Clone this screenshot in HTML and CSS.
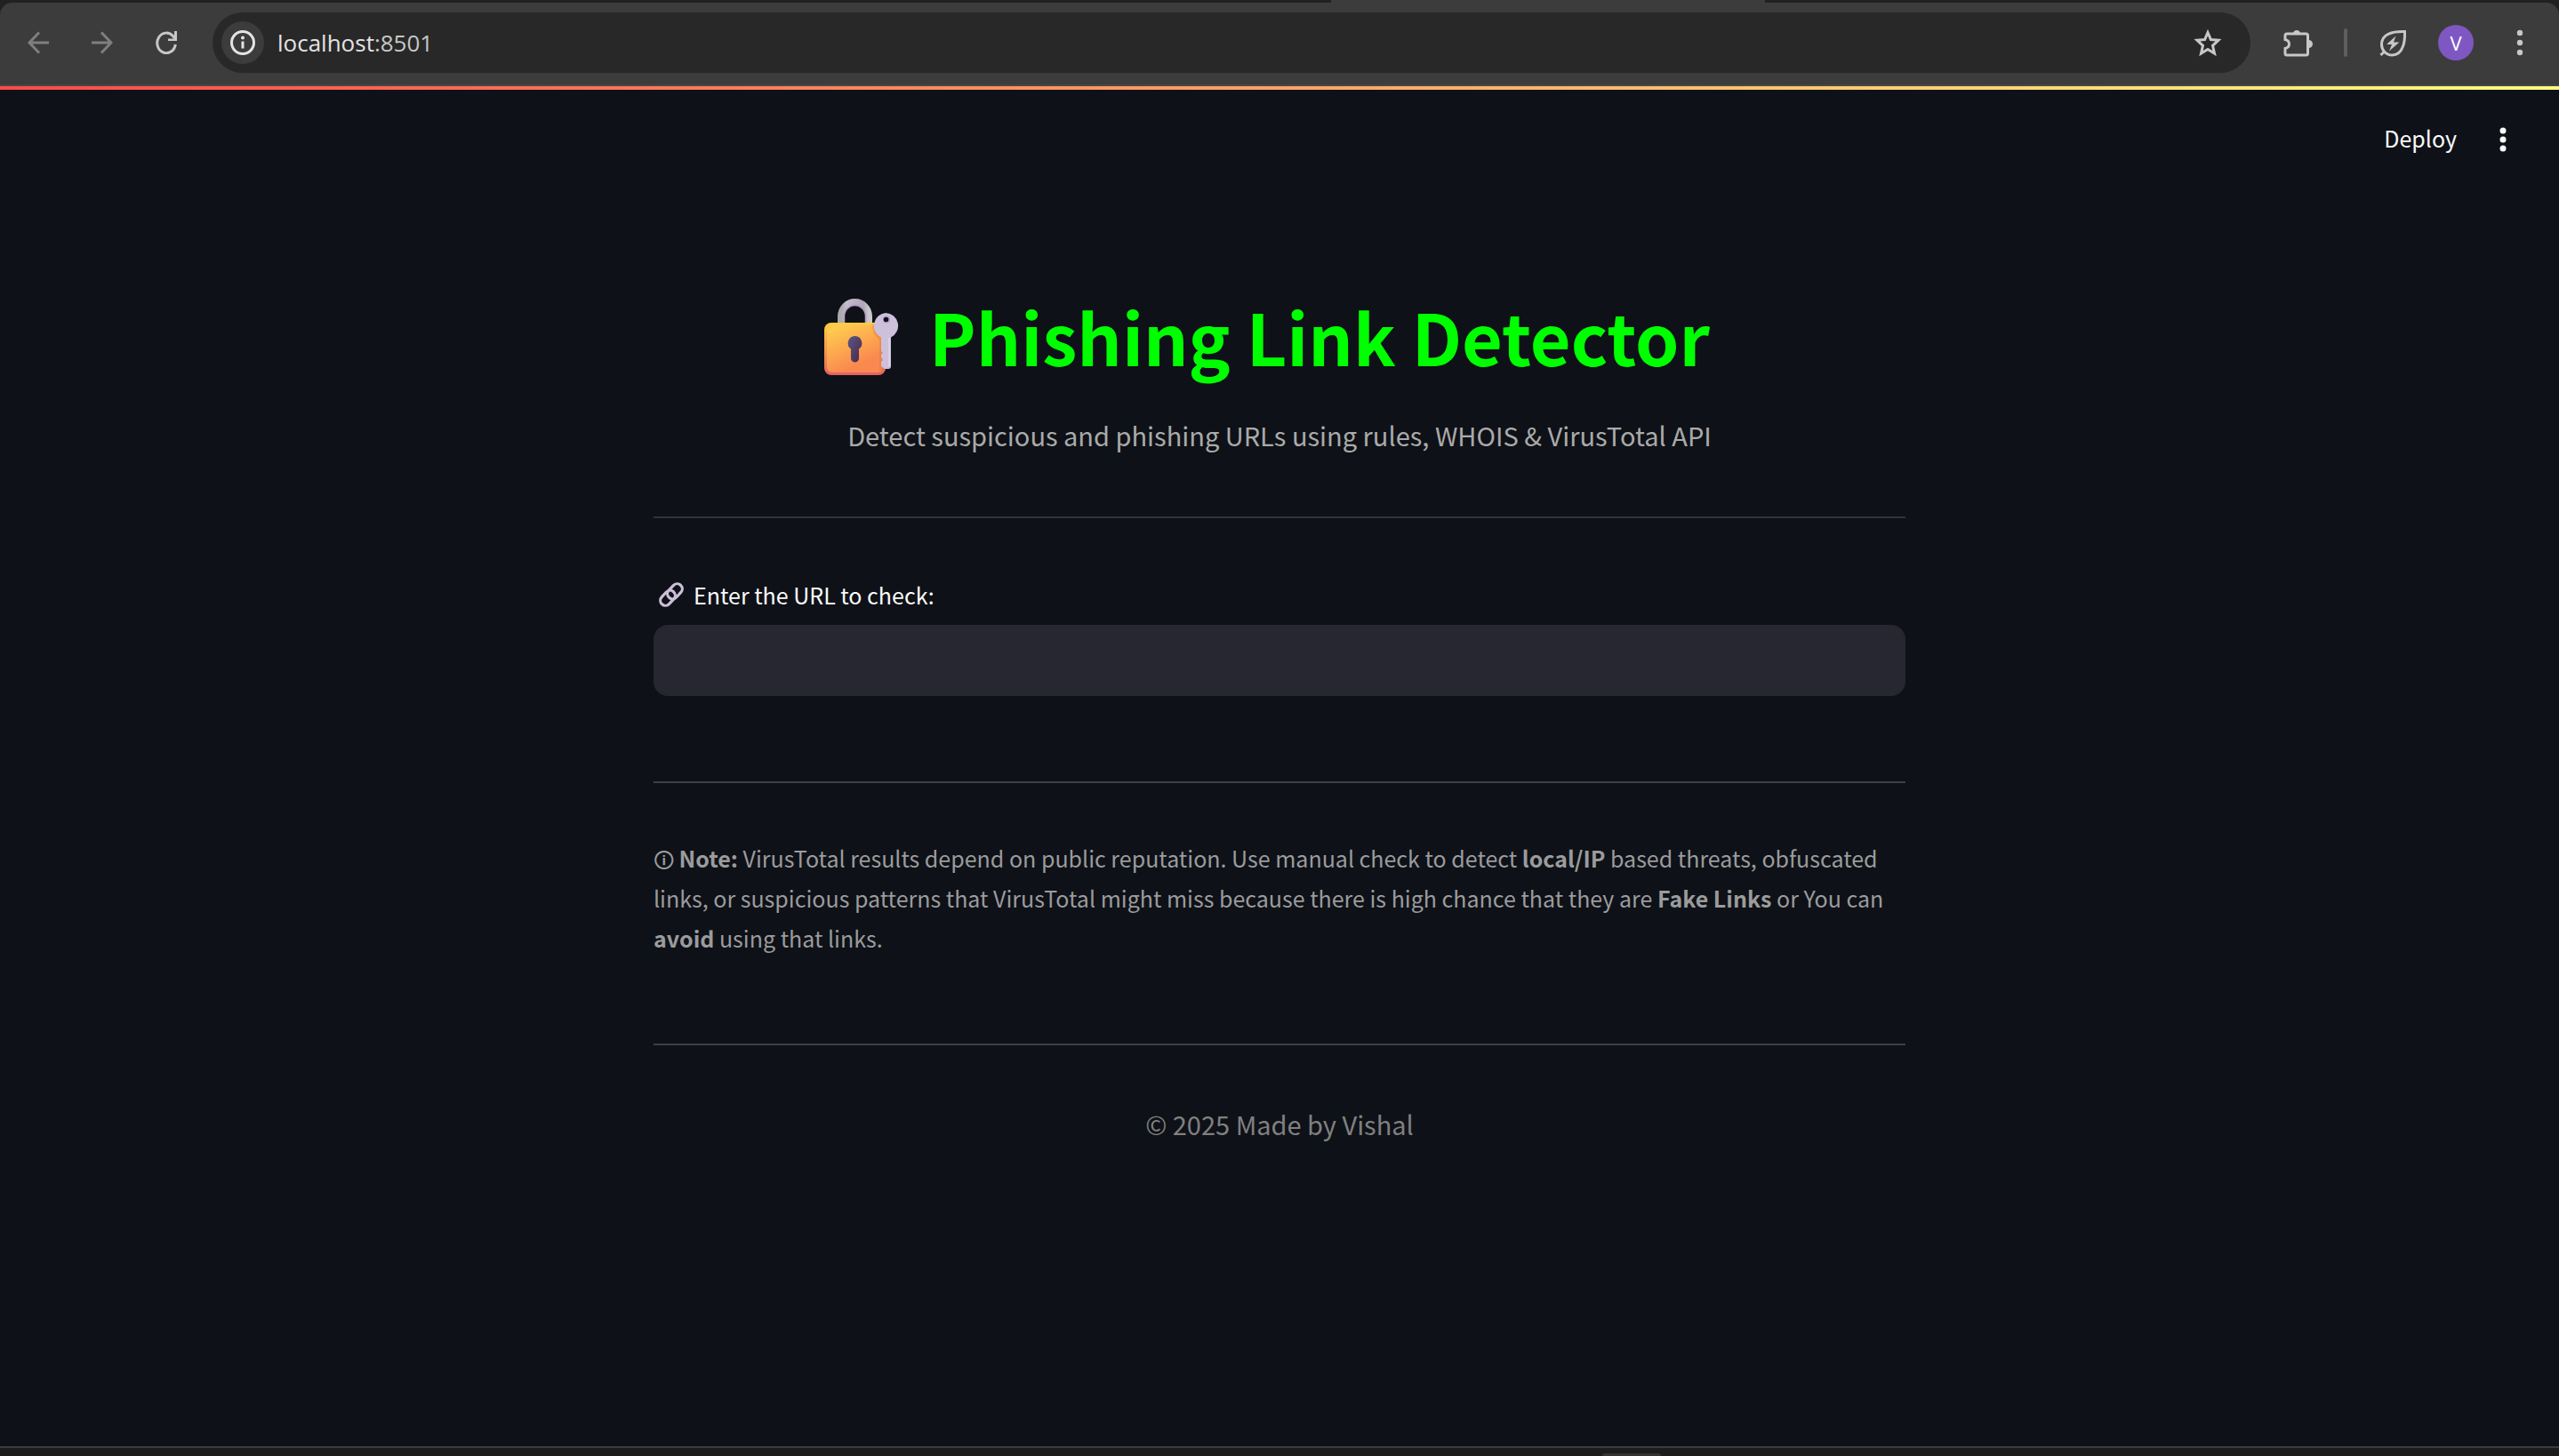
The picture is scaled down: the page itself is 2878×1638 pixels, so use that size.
FILE: index.html
```html
<!DOCTYPE html>
<html lang="en">
<head>
<meta charset="utf-8">
<title>Phishing Link Detector</title>
<link rel="stylesheet" href="styles.css">
</head>
<body>
<div class="window">
  <header class="browser">
    <div class="tab-strip"><div class="tab"></div></div>
    <nav class="toolbar" aria-label="Browser toolbar">
      <div class="nav-buttons">
        <button class="icon-button dim" aria-label="Back">
          <svg viewBox="0 0 24 26" width="24" height="26"><path d="M24 13H2.500M13 1.500L2 13l11 11.500"/></svg>
        </button>
        <button class="icon-button dim" aria-label="Forward">
          <svg viewBox="0 0 24 26" width="24" height="26"><path d="M0 13h21.500M11 1.500L22 13 11 24.500"/></svg>
        </button>
        <button class="icon-button" aria-label="Reload">
          <svg viewBox="0 0 24 26" width="24" height="26"><path d="M22.300 15A10.300 11.300 0 1 1 19.500 5.500l2.500 3"/><path class="solid" d="M21 0h3v11H14V8.500h7z"/></svg>
        </button>
      </div>
      <div class="address-bar">
        <button class="site-info" aria-label="View site information">
          <svg viewBox="0 0 28 28" width="28" height="28"><circle cx="14" cy="14" r="12.500"/><path d="M14 12.500v8"/><circle class="solid" cx="14" cy="8.500" r="2"/></svg>
        </button>
        <span class="address">localhost<span class="port">:8501</span></span>
        <button class="icon-button" aria-label="Bookmark this page">
          <svg viewBox="0 0 32 32" width="32" height="32"><path d="M16 4.500l3.400 8 8.600.8-6.500 6 2 8.700-7.500-4.600L8.500 28l2-8.700-6.500-6 8.600-.8z"/></svg>
        </button>
      </div>
      <div class="tools">
        <button class="icon-button" aria-label="Extensions">
          <svg viewBox="0 0 34 34" width="34" height="34"><path d="M5 7h21.500a2 2 0 0 1 2 2v20a2 2 0 0 1-2 2H5a2 2 0 0 1-2-2v-5.500c6-1.500 6-8.500 0-10V9a2 2 0 0 1 2-2z"/><path class="solid" d="M12 6a4.200 4.200 0 0 1 8 0zM29.500 14a4.200 4.200 0 0 1 0 9z"/></svg>
        </button>
        <span class="divider"></span>
        <button class="icon-button" aria-label="Energy saver">
          <svg viewBox="0 0 32 32" width="32" height="32"><path d="M29.500 3.500C16 3 3.500 6 3.500 18c0 6.500 5 12 12 12C27.500 30 30 15 29.500 3.500zM2.500 30l5-5"/><path class="solid" d="M19.500 8.500L9 18h6l-3 7.500L23.500 15.500h-6.500z"/></svg>
        </button>
        <button class="avatar" aria-label="Profile">V</button>
        <button class="icon-button menu" aria-label="Browser menu">
          <svg viewBox="0 0 8 30" width="8" height="30"><g class="solid"><circle cx="4" cy="4" r="3.200"/><circle cx="4" cy="15" r="3.200"/><circle cx="4" cy="26" r="3.200"/></g></svg>
        </button>
      </div>
    </nav>
  </header>
  <div class="app">
    <div class="app-bar">
      <button class="deploy">Deploy</button>
      <button class="app-menu" aria-label="App menu">
        <svg viewBox="0 0 8 28" width="8" height="28"><circle cx="4" cy="4" r="3.500"/><circle cx="4" cy="14" r="3.500"/><circle cx="4" cy="24" r="3.500"/></svg>
      </button>
    </div>
    <main class="content">
      <h1 class="title">
        <svg viewBox="0 -2 84 88" width="84" height="88" role="img" aria-label="Locked with key">
          <defs>
            <linearGradient id="body" x1="0" y1="0" x2=".5" y2="1"><stop offset=".15" stop-color="#ffc84e"/><stop offset=".9" stop-color="#fa8950"/></linearGradient>
            <linearGradient id="edge" x1="0" y1="0" x2="0" y2="1"><stop offset="0" stop-color="#ffce3e"/><stop offset=".6" stop-color="#ed914b"/><stop offset="1" stop-color="#e85f65"/></linearGradient>
            <linearGradient id="shackle" x1="0" y1="0" x2="1" y2="0"><stop offset="0" stop-color="#aaa9ad"/><stop offset=".2" stop-color="#c7bdcc"/><stop offset=".8" stop-color="#b3a5bb"/><stop offset="1" stop-color="#cac8cc"/></linearGradient>
            <linearGradient id="hole" x1="0" y1="0" x2="1" y2="1"><stop offset="0" stop-color="#5a5686"/><stop offset="1" stop-color="#482848"/></linearGradient>
          </defs>
          <path d="M19 30V20a15.500 16 0 0 1 31 0v10" fill="none" stroke="url(#shackle)" stroke-width="8"/>
          <path d="M22.500 29V20a12 12.500 0 0 1 24 0v9" fill="none" stroke="#aa8fbd" stroke-opacity=".55" stroke-width="2"/>
          <rect x="0" y="27" width="69" height="59" rx="8" fill="url(#edge)"/>
          <rect x="3" y="29" width="63" height="54" rx="6" fill="url(#body)"/>
          <path d="M54 29c0 10 4 14 8 17v35h5V29z" fill="#c9793d" fill-opacity=".35"/>
          <path d="M34.500 42a8 8 0 0 1 4.500 14.500V67a4.500 4.500 0 0 1-9 0V56.500A8 8 0 0 1 34.500 42z" fill="url(#hole)"/>
          <path d="M69 16a14.500 14.500 0 0 1 6 27.500V76a3 3 0 0 1-3 3h-4l-4-3v-5l2-2-2-3v-3l2-2-2-2V43.500A14.500 14.500 0 0 1 69 16z" fill="#cdc0dc"/>
          <path d="M73 44v32" stroke="#dcd0e6" stroke-width="2"/>
          <circle cx="70" cy="23.500" r="4" fill="#b49cc6"/><circle cx="69.500" cy="23.500" r="2.800" fill="#0e1117"/>
        </svg>
        <span>Phishing Link Detector</span>
      </h1>
      <p class="subtitle">Detect suspicious and phishing URLs using rules, WHOIS &amp; VirusTotal API</p>
      <hr class="rule plain">
      <div class="field">
        <label class="field-label" for="url">
          <svg viewBox="0 0 28 28" width="28" height="28" aria-hidden="true"><g fill="none" stroke="#cdbfd6" stroke-width="3.200"><rect x="8.500" y="4.500" width="19" height="11.500" rx="5.700" transform="rotate(-47 18 10.300)"/><rect x=".5" y="12" width="19" height="11.500" rx="5.700" transform="rotate(-47 10 17.700)"/></g></svg>
          <span>Enter the URL to check:</span>
        </label>
        <input class="url-input" id="url" type="text">
      </div>
      <hr class="rule">
      <p class="note"><span class="info">🛈</span> <strong>Note:</strong> VirusTotal results depend on public reputation. Use manual check to detect <strong>local/IP</strong> based threats, obfuscated links, or suspicious patterns that VirusTotal might miss because there is high chance that they are <strong>Fake Links</strong> or You can <strong>avoid</strong> using that links.</p>
      <hr class="rule">
      <footer class="credit">© 2025 Made by Vishal</footer>
    </main>
  </div>
  <div class="taskbar"><span class="task"></span></div>
</div>
</body>
</html>
```
FILE: styles.css
```css
* {
  box-sizing: border-box;
}

body {
  margin: 0;
  background: #0e1117;
  color: #fafafa;
  font-family: "Noto Sans CJK SC", "Noto Sans", sans-serif;
}

button {
  padding: 0;
  border: 0;
  background: none;
  color: inherit;
  font: inherit;
}

svg {
  display: block;
}

.window {
  display: flex;
  flex-direction: column;
  min-height: 100vh;
}

/* Browser toolbar */
.browser {
  background: #202222;
}

.tab-strip {
  display: flex;
  height: 3px;
  padding-left: 52%;
}

.tab {
  width: 488px;
  background: #3c3c3c;
}

.toolbar {
  display: flex;
  align-items: center;
  height: 94px;
  padding: 0 40px 2px 31px;
  border-bottom: 2px solid #474747;
  border-radius: 14px 14px 0 0;
  background: #3c3c3c;
}

.nav-buttons {
  display: flex;
  gap: 48px;
  width: 208px;
}

.icon-button svg {
  fill: none;
  stroke: #c7c7c7;
  stroke-width: 3;
}

.icon-button .solid {
  fill: #c7c7c7;
  stroke: none;
}

.icon-button.dim svg {
  stroke: #7f7f7f;
}

.address-bar {
  display: flex;
  flex: 1;
  align-items: center;
  height: 68px;
  padding: 0 32px 0 10px;
  border-radius: 34px;
  background: #282828;
}

.site-info {
  display: grid;
  place-items: center;
  width: 48px;
  height: 48px;
  border-radius: 50%;
  background: #3c3c3c;
}

.site-info svg {
  fill: none;
  stroke: #e3e3e3;
  stroke-width: 3;
}

.site-info .solid {
  fill: #e3e3e3;
  stroke: none;
}

.address {
  flex: 1;
  padding-left: 15px;
  color: #e3e3e3;
  font: 26px/36px "Open Sans", sans-serif;
}

.port {
  color: #c7c7c7;
}

.tools {
  display: flex;
  align-items: center;
  gap: 35px;
  padding-left: 36px;
}

.divider {
  width: 4px;
  height: 32px;
  border-radius: 2px;
  background: #5f5f5f;
}

.avatar {
  width: 40px;
  height: 40px;
  border-radius: 50%;
  background: #7e57c2;
  color: #fff;
  font: 22px/40px "Open Sans", sans-serif;
}

.menu {
  padding-left: 13px;
}

/* Application */
.app {
  flex: 1;
}

.app::before {
  display: block;
  height: 4px;
  background: linear-gradient(90deg, #ff4b4b, #fffd80);
  content: "";
}

.app-bar {
  display: flex;
  align-items: center;
  justify-content: flex-end;
  gap: 48px;
  height: 112px;
  padding-right: 59px;
}

.deploy {
  padding-bottom: 4px;
  font-size: 25px;
}

.app-menu svg {
  fill: #fafafa;
}

.content {
  width: 100%;
  max-width: 1408px;
  margin: 0 auto;
  padding-top: 112px;
}

.title {
  display: flex;
  align-items: center;
  justify-content: center;
  gap: 34px;
  margin: 0;
  padding-right: 28px;
  color: #0f0;
  font-size: 79px;
  font-weight: 700;
  line-height: 106px;
}

.subtitle {
  margin: 32px 0 66px;
  color: #aaa;
  font-size: 29px;
  line-height: 52px;
  text-align: center;
}

.rule {
  height: 2px;
  margin: 0;
  border: 0;
  background: #3d4045;
}

.rule.plain {
  background: #333;
}

.field {
  padding: 64px 0 96px;
}

.field-label {
  display: flex;
  align-items: center;
  gap: 11px;
  height: 44px;
  margin-bottom: 12px;
  padding-left: 6px;
  font-size: 25px;
}

.url-input {
  display: block;
  width: 100%;
  height: 80px;
  padding: 0 24px;
  border: 2px solid #262730;
  border-radius: 16px;
  outline: 0;
  background: #262730;
  color: #fafafa;
  font: inherit;
  font-size: 29px;
}

.note {
  margin: 62px 0 96px;
  color: #9b9b9d;
  font-size: 25px;
  line-height: 45px;
}

.info {
  font-size: 23px;
  line-height: 1;
}

.credit {
  padding: 62px 0;
  color: #808080;
  font-size: 29px;
  line-height: 52px;
  text-align: center;
}

/* Edge of the desktop taskbar */
.taskbar {
  display: flex;
  height: 11px;
  padding: 6px 0 0 62.6%;
  border-top: 2px solid #3c3c3c;
  background: #1c1c1c;
}

.task {
  width: 66px;
  height: 3px;
  border-radius: 6px 6px 0 0;
  background: #333;
}
```
